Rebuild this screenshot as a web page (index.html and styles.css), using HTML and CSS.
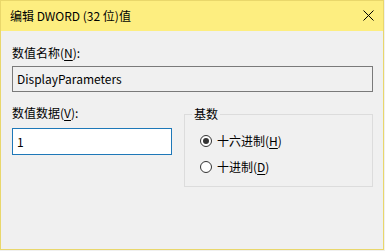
FILE: index.html
```html
<!DOCTYPE html>
<html lang="zh-CN">
<head>
<meta charset="utf-8">
<title>编辑 DWORD (32 位)值</title>
<link rel="stylesheet" href="styles.css">
</head>
<body>
<div class="win">
  <div class="titlebar">
    <span class="title">编辑 DWORD (32 位)值</span>
    <svg class="close" width="11" height="11" viewBox="0 0 11 11"><path d="M0.5 0.5 L10.5 10.5 M10.5 0.5 L0.5 10.5" stroke="#000" stroke-width="1" fill="none"/></svg>
  </div>
  <div class="body">
    <div class="label first">数值名称(<u>N</u>):</div>
    <div class="field readonly">DisplayParameters</div>
    <div class="row">
      <div class="col">
        <div class="label">数值数据(<u>V</u>):</div>
        <div class="field focus">1</div>
      </div>
      <fieldset class="group">
        <legend>基数</legend>
        <div class="radio"><span class="dot checked"></span><span>十六进制(<u>H</u>)</span></div>
        <div class="radio"><span class="dot"></span><span>十进制(<u>D</u>)</span></div>
      </fieldset>
    </div>
  </div>
</div>
</body>
</html>
```
FILE: styles.css
```css
html, body {
  margin: 0;
  padding: 0;
  background: #f0f0f0;
}
.win {
  width: 384px;
  height: 250px;
  box-sizing: border-box;
  border: 1px solid #e9d76b;
  background: #f0f0f0;
  font-family: "Noto Sans CJK SC", "Noto Sans", sans-serif;
  font-size: 12px;
  color: #000;
  display: flex;
  flex-direction: column;
}
.titlebar {
  height: 30px;
  background: #fdee80;
  display: flex;
  align-items: center;
  justify-content: space-between;
  padding: 0 9px 0 9px;
  flex: none;
}
.title {
  font-size: 12px;
  line-height: 16px;
}
.close {
  display: block;
  margin-top: -1px;
}
.body {
  padding: 14px 10px 0 11px;
}
.label {
  line-height: 16px;
  height: 16px;
}
.label u, .radio u {
  text-decoration-thickness: 1px;
  text-underline-offset: 2px;
}
.field {
  box-sizing: border-box;
  height: 26px;
  margin-top: 5px;
  padding: 0 4px;
  line-height: 24px;
  border: 1px solid #7a7a7a;
}
.field.readonly {
  background: #f0f0f0;
}
.field.focus {
  background: #fff;
  border-color: #1e78b8;
  height: 27px;
  margin-top: 7px;
  line-height: 25px;
}
.row {
  display: flex;
  gap: 12px;
  margin-top: 13px;
}
.col {
  width: 161px;
}
.group {
  margin: 1px 0 0 0;
  padding: 6px 0 0 15px;
  width: 190px;
  height: 81px;
  box-sizing: border-box;
  border: 1px solid #dcdcdc;
  min-width: 0;
}
.group legend {
  padding: 0 2px;
  margin-left: -8px;
  line-height: 16px;
}
.radio {
  display: flex;
  align-items: center;
  gap: 5px;
  height: 26px;
  line-height: 16px;
}
.dot {
  width: 12px;
  height: 12px;
  box-sizing: border-box;
  border: 1px solid #333;
  border-radius: 50%;
  background: #fff;
  position: relative;
  flex: none;
}
.dot.checked::after {
  content: "";
  position: absolute;
  left: 2px;
  top: 2px;
  width: 6px;
  height: 6px;
  border-radius: 50%;
  background: #333;
}
```
